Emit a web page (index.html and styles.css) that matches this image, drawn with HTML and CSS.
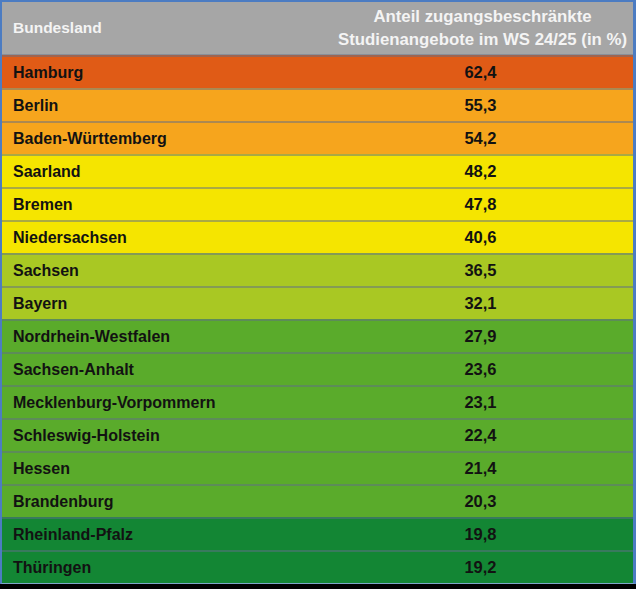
FILE: index.html
```html
<!DOCTYPE html>
<html lang="de">
<head>
<meta charset="utf-8">
<link rel="stylesheet" href="styles.css">
</head>
<body>
<div class="table">
  <div class="row head">
    <div class="name">Bundesland</div>
    <div class="val">Anteil zugangsbeschränkte<br>Studienangebote im WS 24/25 (in %)</div>
  </div>
  <div class="row c1"><div class="name">Hamburg</div><div class="val">62,4</div></div>
  <div class="row c2"><div class="name">Berlin</div><div class="val">55,3</div></div>
  <div class="row c2"><div class="name">Baden-Württemberg</div><div class="val">54,2</div></div>
  <div class="row c3"><div class="name">Saarland</div><div class="val">48,2</div></div>
  <div class="row c3"><div class="name">Bremen</div><div class="val">47,8</div></div>
  <div class="row c3"><div class="name">Niedersachsen</div><div class="val">40,6</div></div>
  <div class="row c4"><div class="name">Sachsen</div><div class="val">36,5</div></div>
  <div class="row c4"><div class="name">Bayern</div><div class="val">32,1</div></div>
  <div class="row c5"><div class="name">Nordrhein-Westfalen</div><div class="val">27,9</div></div>
  <div class="row c5"><div class="name">Sachsen-Anhalt</div><div class="val">23,6</div></div>
  <div class="row c5"><div class="name">Mecklenburg-Vorpommern</div><div class="val">23,1</div></div>
  <div class="row c5"><div class="name">Schleswig-Holstein</div><div class="val">22,4</div></div>
  <div class="row c5"><div class="name">Hessen</div><div class="val">21,4</div></div>
  <div class="row c5"><div class="name">Brandenburg</div><div class="val">20,3</div></div>
  <div class="row c6"><div class="name">Rheinland-Pfalz</div><div class="val">19,8</div></div>
  <div class="row c6"><div class="name">Thüringen</div><div class="val">19,2</div></div>
</div>
</body>
</html>
```
FILE: styles.css
```css
html, body {
  margin: 0;
  padding: 0;
  background: #000;
}
body {
  width: 636px;
  height: 589px;
  overflow: hidden;
  font-family: "Liberation Sans", Arial, sans-serif;
  font-weight: bold;
}
.table {
  width: 631px;
  border-left: 2px solid #4c7cc2;
  border-top: 2px solid #4c7cc2;
  border-right: 3px solid #4c7cc2;
  border-bottom: 1px solid #7ea6c8;
  display: flex;
  flex-direction: column;
}
.row {
  display: grid;
  grid-template-columns: 326px 1fr;
  align-items: center;
  height: 31px;
  border-top: 2px solid rgba(95, 110, 135, 0.5);
  color: #121212;
  font-size: 16px;
}
.row .name {
  padding-left: 11px;
}
.row .val {
  text-align: center;
  font-size: 16.5px;
}
.head {
  height: 52px;
  border-top: none;
  border-bottom: 1px solid rgba(95, 110, 135, 0.4);
  background: #a6a6a6;
  color: #f4f4f4;
}
.head .name {
  font-size: 15.5px;
}
.head .val {
  font-size: 16.8px;
  line-height: 23px;
  padding-left: 4px;
}
.c1 { background: #e05b16; }
.c2 { background: #f6a51d; }
.c3 { background: #f5e500; }
.c4 { background: #a9c823; }
.c5 { background: #5aab2b; }
.c6 { background: #138634; }
```
